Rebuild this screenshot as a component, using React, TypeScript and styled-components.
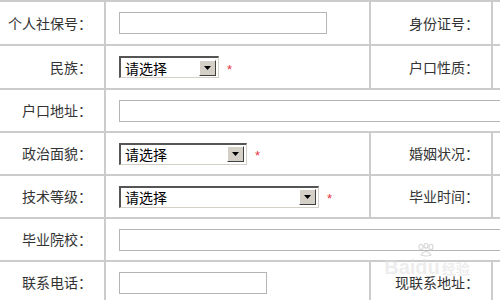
import { styled, createGlobalStyle } from "styled-components";

const GlobalStyle = createGlobalStyle`
  html, body {
    margin: 0;
    padding: 0;
    background: #fff;
  }
  body {
    font-family: "Noto Sans CJK SC", "Liberation Sans", sans-serif;
  }
`;

type Field =
  | { kind: "text"; width: number }
  | { kind: "select"; width: number; required?: boolean }
  | { kind: "wide" };

interface iRow {
  label: string;
  field: Field;
  label2?: string;
}

const rows: iRow[] = [
  { label: "个人社保号：", field: { kind: "text", width: 206 }, label2: "身份证号：" },
  { label: "民族：", field: { kind: "select", width: 100, required: true }, label2: "户口性质：" },
  { label: "户口地址：", field: { kind: "wide" } },
  { label: "政治面貌：", field: { kind: "select", width: 128, required: true }, label2: "婚姻状况：" },
  { label: "技术等级：", field: { kind: "select", width: 200, required: true }, label2: "毕业时间：" },
  { label: "毕业院校：", field: { kind: "wide" } },
  { label: "联系电话：", field: { kind: "text", width: 146 }, label2: "现联系地址：" },
];

const Select = ({ width }: { width: number }) => (
  <SelectBox $w={width}>
    <SelectText>请选择</SelectText>
    <SelectButton>
      <svg width="7" height="4" viewBox="0 0 7 4">
        <path d="M0 0 H7 L3.5 4 Z" fill="#000" />
      </svg>
    </SelectButton>
  </SelectBox>
);

const App = () => {
  return (
    <>
      <GlobalStyle />
      <Page>
        <Grid>
          {rows.map((row) => {
            const f = row.field;
            return (
              <Row key={row.label}>
                <Label>{row.label}</Label>
                {f.kind === "wide" ? (
                  <Cell $span={3}>
                    <TextInput $w={400} />
                  </Cell>
                ) : (
                  <>
                    <Cell>
                      {f.kind === "text" ? (
                        <TextInput $w={f.width} />
                      ) : (
                        <>
                          <Select width={f.width} />
                          {f.required && <Star>*</Star>}
                        </>
                      )}
                    </Cell>
                    <Label>{row.label2}</Label>
                    <Cell />
                  </>
                )}
              </Row>
            );
          })}
        </Grid>
        <Watermark>
          <svg width="22" height="14" viewBox="0 0 22 14">
            <g fill="none" stroke="rgba(200,200,200,0.7)" strokeWidth="1.2">
              <ellipse cx="5" cy="4" rx="2" ry="2.6" />
              <ellipse cx="10" cy="2.8" rx="2" ry="2.4" />
              <ellipse cx="15" cy="4" rx="2" ry="2.6" />
              <path d="M5 12 Q10 5 15 12 Q10 14 5 12 Z" />
            </g>
          </svg>
          <Brand>
            Baidu<small>经验</small>
          </Brand>
        </Watermark>
      </Page>
    </>
  );
};

export default App;

const Page = styled.div`
  position: relative;
  width: 500px;
  height: 300px;
  overflow: hidden;
`;

const Grid = styled.div`
  display: grid;
  grid-template-columns: 104px 263px 120px 1fr;
  grid-template-rows: 42px 42px 41px 41px 41px 41px 41px;
  gap: 2px;
  padding-top: 2px;
  background: #cccccc;
  width: 500px;
`;

const Row = styled.div`
  display: contents;
`;

const Label = styled.div`
  background: #fff;
  display: flex;
  align-items: center;
  justify-content: flex-end;
  padding-right: 12px;
  padding-bottom: 1px;
  font-size: 14px;
  color: #333;
  white-space: nowrap;
`;

const Cell = styled.div<{ $span?: number }>`
  background: #fff;
  display: flex;
  align-items: center;
  padding-left: 13px;
  grid-column: span ${(p) => p.$span ?? 1};
  overflow: hidden;
`;

const TextInput = styled.div<{ $w: number }>`
  width: ${(p) => p.$w}px;
  height: 20px;
  flex-shrink: 0;
  border: 1px solid #b5b5b5;
  background: #fff;
`;

const SelectBox = styled.div<{ $w: number }>`
  width: ${(p) => p.$w}px;
  height: 22px;
  box-sizing: border-box;
  border-top: 2px solid #555;
  border-left: 2px solid #555;
  border-bottom: 1px solid #d4d0c8;
  border-right: 1px solid #d4d0c8;
  background: #fff;
  display: flex;
  align-items: center;
  justify-content: space-between;
  padding-right: 2px;
`;

const SelectText = styled.span`
  font-size: 14px;
  color: #000;
  padding-left: 4px;
  line-height: 18px;
`;

const SelectButton = styled.div`
  width: 17px;
  height: 16px;
  box-sizing: border-box;
  background: #d4d0c8;
  border-top: 1px solid #fff;
  border-left: 1px solid #fff;
  border-right: 1px solid #404040;
  border-bottom: 1px solid #404040;
  display: flex;
  align-items: center;
  justify-content: center;
`;

const Star = styled.span`
  color: #e8343c;
  font-size: 13px;
  font-family: "Liberation Sans", sans-serif;
  margin-left: 8px;
  margin-top: 4px;
`;

const Watermark = styled.div`
  position: absolute;
  left: 382px;
  top: 243px;
  display: flex;
  flex-direction: column;
  align-items: center;
  width: 90px;
  pointer-events: none;
`;

const Brand = styled.div`
  font-family: "Liberation Sans", sans-serif;
  font-size: 20px;
  font-weight: bold;
  line-height: 20px;
  color: rgba(222, 222, 222, 0.55);

  small {
    font-family: "Noto Sans CJK SC", sans-serif;
    font-size: 14px;
    margin-left: 2px;
  }
`;
